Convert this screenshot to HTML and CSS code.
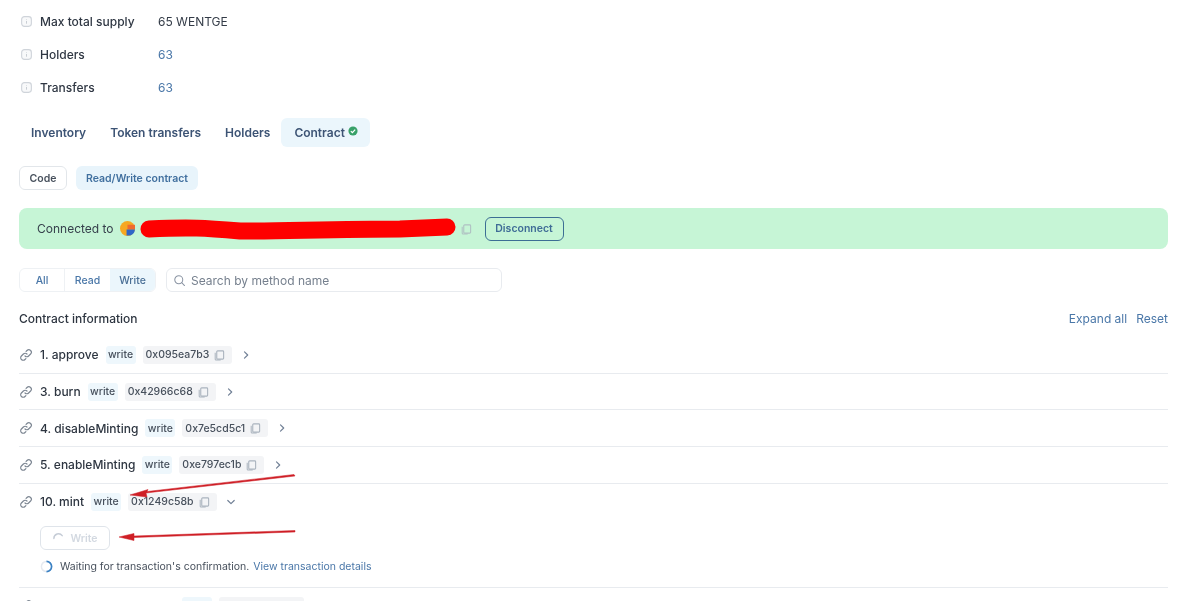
FILE: index.html
```html
<!DOCTYPE html>
<html lang="en">
<head>
<meta charset="utf-8">
<title>Contract</title>
<link rel="stylesheet" href="styles.css">
</head>
<body>
<svg width="0" height="0" class="defs">
  <symbol id="info" viewBox="0 0 12 12"><rect x=".7" y=".7" width="10.6" height="10.6" rx="3" fill="#f8f9fa" stroke="#cfd4da" stroke-width="1.2"/><path d="M6 5.400v3M6 3.400v.6" stroke="#c4c9d0" stroke-width="1"/></symbol>
  <symbol id="copy" viewBox="0 0 12 12"><path d="M4 1.500h5.500a1 1 0 0 1 1 1V9.500a1 1 0 0 1-1 1H4a1 1 0 0 1-1-1v-7a1 1 0 0 1 1-1z" fill="none" stroke="#aab3be" stroke-width="1.200"/><path d="M1.300 3.500v7a1 1 0 0 0 1 1h5" fill="none" stroke="#aab3be" stroke-width="1.100"/></symbol>
  <symbol id="link" viewBox="0 0 14 14"><path d="M6 8a2.500 2.500 0 0 0 3.600 0l2-2A2.500 2.500 0 0 0 8 2.500l-.9.900M8 6a2.500 2.500 0 0 0-3.600 0l-2 2A2.500 2.500 0 0 0 6 11.500l.9-.9" fill="none" stroke="#7d8793" stroke-width="1.200" stroke-linecap="round"/></symbol>
  <symbol id="chev" viewBox="0 0 10 10"><path d="M3.500 1.800 6.700 5 3.500 8.200" fill="none" stroke="#718096" stroke-width="1.200" stroke-linecap="round" stroke-linejoin="round"/></symbol>
</svg>

<main class="page">
  <section class="stats">
    <div class="stat"><svg class="i-info"><use href="#info"/></svg><span class="stat-label">Max total supply</span><span class="stat-value">65 WENTGE</span></div>
    <div class="stat"><svg class="i-info"><use href="#info"/></svg><span class="stat-label">Holders</span><span class="stat-link">63</span></div>
    <div class="stat"><svg class="i-info"><use href="#info"/></svg><span class="stat-label">Transfers</span><span class="stat-link">63</span></div>
  </section>

  <nav class="tabs">
    <span class="tab">Inventory</span>
    <span class="tab">Token transfers</span>
    <span class="tab">Holders</span>
    <span class="tab tab-active">Contract<svg class="i-check" viewBox="0 0 12 12"><circle cx="6" cy="6" r="5.500" fill="#38a169"/><path d="M3.400 6.100 5.300 8l3.300-3.600" fill="none" stroke="#fff" stroke-width="1.500"/></svg></span>
  </nav>

  <div class="subtabs">
    <span class="subtab-code">Code</span>
    <span class="subtab-rw">Read/Write contract</span>
  </div>

  <div class="banner">
    <span>Connected to</span>
    <svg class="avatar" viewBox="0 0 16 16"><circle cx="8" cy="8" r="8" fill="#f6a821"/><path d="M8 4h8v5H8z" fill="#ef6b2e"/><path d="M7 9h9a8 8 0 0 1-5 6.500H7z" fill="#2f66c8"/></svg>
    <span class="address"></span>
    <svg class="i-copy-banner"><use href="#copy"/></svg>
    <span class="disconnect">Disconnect</span>
  </div>

  <div class="filters">
    <div class="segment">
      <span class="seg">All</span>
      <span class="seg seg-mid">Read</span>
      <span class="seg seg-active">Write</span>
    </div>
    <div class="search">
      <svg class="i-search" viewBox="0 0 14 14"><circle cx="6.200" cy="6.200" r="4.300" fill="none" stroke="#8a94a3" stroke-width="1.100"/><path d="m9.400 9.400 3 3" stroke="#8a94a3" stroke-width="1.100" stroke-linecap="round"/></svg>
      <span>Search by method name</span>
    </div>
  </div>

  <div class="info-head">
    <span class="info-title">Contract information</span>
    <span class="info-actions"><span>Expand all</span><span>Reset</span></span>
  </div>

  <div class="method">
    <div class="method-row"><svg class="i-link"><use href="#link"/></svg><span class="method-name">1. approve</span><span class="tag-write">write</span><span class="tag-hash">0x095ea7b3<svg class="i-copy"><use href="#copy"/></svg></span><svg class="i-chev"><use href="#chev"/></svg></div>
  </div>
  <div class="method">
    <div class="method-row"><svg class="i-link"><use href="#link"/></svg><span class="method-name">3. burn</span><span class="tag-write">write</span><span class="tag-hash">0x42966c68<svg class="i-copy"><use href="#copy"/></svg></span><svg class="i-chev"><use href="#chev"/></svg></div>
  </div>
  <div class="method">
    <div class="method-row"><svg class="i-link"><use href="#link"/></svg><span class="method-name">4. disableMinting</span><span class="tag-write">write</span><span class="tag-hash">0x7e5cd5c1<svg class="i-copy"><use href="#copy"/></svg></span><svg class="i-chev"><use href="#chev"/></svg></div>
  </div>
  <div class="method">
    <div class="method-row"><svg class="i-link"><use href="#link"/></svg><span class="method-name">5. enableMinting</span><span class="tag-write">write</span><span class="tag-hash">0xe797ec1b<svg class="i-copy"><use href="#copy"/></svg></span><svg class="i-chev"><use href="#chev"/></svg></div>
  </div>
  <div class="method">
    <div class="method-row"><svg class="i-link"><use href="#link"/></svg><span class="method-name">10. mint</span><span class="tag-write">write</span><span class="tag-hash">0x1249c58b<svg class="i-copy"><use href="#copy"/></svg></span><svg class="i-chev i-chev-down"><use href="#chev"/></svg></div>
    <div class="method-body">
      <span class="write-btn"><svg class="i-spin-btn" viewBox="0 0 14 14"><path d="M2 8a5 5 0 0 1 9-3" fill="none" stroke="#c5ccd6" stroke-width="1.500" stroke-linecap="round"/></svg>Write</span>
      <div class="waiting">
        <svg class="i-spin" viewBox="0 0 14 14"><circle cx="7" cy="7" r="5.500" fill="none" stroke="#e6eaf0" stroke-width="1.600"/><path d="M7 1.500A5.500 5.500 0 0 1 7 12.500" fill="none" stroke="#3b82c4" stroke-width="1.800"/></svg>
        <span>Waiting for transaction's confirmation.</span>
        <span class="link">View transaction details</span>
      </div>
    </div>
  </div>
  <div class="method">
    <div class="method-row"><svg class="i-link"><use href="#link"/></svg><span class="name-blank"></span><span class="tag-write"></span><span class="tag-hash tag-hash-blank"></span></div>
  </div>
</main>

<svg class="overlay" viewBox="0 0 1200 601" aria-hidden="true">
  <path class="scribble" d="M149 229C190 227 205 228 240 231 280 231 340 229 400 229L447 227"/>
  <path class="arrow-head" d="M294 474.500 295 476 146 493 147 497 130 495 148 489.500 147 491.500z"/>
  <path class="arrow-head" d="M295 530.500 295 532 134 537.500 134 540.500 119 537 134 533.500 134 536z"/>
</svg>
</body>
</html>
```

FILE: styles.css
```css
* { box-sizing: border-box; }
html, body { margin: 0; height: 601px; overflow: hidden; background: #fff; }
body { font-family: Inter, "Liberation Sans", sans-serif; font-size: 12px; color: #2d3748; position: relative; }
.defs { position: absolute; }
.page { padding: 5px 32px 0 19px; filter: blur(.3px); }

.stats { display: flex; flex-direction: column; }
.stat { display: flex; align-items: center; height: 33px; padding-left: 2px; font-weight: 500; }
.i-info { width: 11px; height: 11px; margin-right: 8px; }
.stat-label { width: 118px; color: #2f3743; }
.stat-value { font-weight: 400; color: #333b47; }
.stat-link { font-weight: 400; color: #4a77a8; }

.tabs { display: flex; margin-top: 14px; height: 30px; align-items: flex-start; }
.tab { padding: 0 12px; height: 29px; display: flex; align-items: center; font-weight: 600; color: #3d5475; }
.tab-active { background: #ebf6fc; border-radius: 6px; margin-left: -1px; padding: 0 12px 0 13px; }
.i-check { width: 10px; height: 10px; margin: 0 0 3px 3px; }

.subtabs { display: flex; gap: 9px; margin-top: 18px; font-size: 10.500px; font-weight: 600; }
.subtab-code { height: 24px; width: 48px; display: flex; align-items: center; justify-content: center; border: 1.500px solid #e2e6ea; border-radius: 6px; color: #47505c; }
.subtab-rw { height: 24px; padding: 0 10px; display: flex; align-items: center; background: #e8f4fb; border-radius: 6px; color: #41709f; }

.banner { display: flex; align-items: center; height: 41px; margin-top: 18px; padding-left: 18px; background: #c6f5d6; border-radius: 8px; color: #36404c; }
.avatar { width: 15px; height: 15px; margin-left: 6px; }
.address { width: 315px; margin-left: 7px; }
.i-copy-banner { width: 11px; height: 12px; margin-left: 4px; opacity: .8; }
.disconnect { margin-left: 13px; height: 24px; width: 79px; display: flex; align-items: center; justify-content: center; border: 1.500px solid #3c6e94; border-radius: 6px; font-size: 10.500px; font-weight: 600; color: #3f6c96; }

.filters { display: flex; margin-top: 19px; gap: 10px; font-size: 10.500px; }
.segment { display: flex; height: 24px; width: 137px; border: 1px solid #eef1f4; border-radius: 6px; font-weight: 500; color: #4a77a8; overflow: hidden; }
.seg { display: flex; align-items: center; justify-content: center; width: 44px; }
.seg-mid { width: 46px; border-left: 1px solid #eef1f4; }
.seg-active { flex: 1; background: #ebf6fc; color: #4a6f96; }
.search { display: flex; align-items: center; width: 336px; height: 24px; border: 1px solid #e8ebef; border-radius: 6px; padding-left: 6px; font-size: 12px; color: #76808e; }
.i-search { width: 13px; height: 13px; margin-right: 5px; }

.info-head { display: flex; justify-content: space-between; align-items: center; margin-top: 18px; height: 16px; }
.info-title { font-weight: 500; color: #2d3540; }
.info-actions { display: flex; gap: 9px; color: #4a77a8; }

.method { border-bottom: 1px solid #e8ebef; }
.info-head + .method { margin-top: 11px; }
.method-row { display: flex; align-items: center; height: 35.700px; }
.i-link { width: 14px; height: 14px; margin-right: 7px; }
.method-name { font-weight: 500; color: #2d3540; white-space: nowrap; }
.name-blank { width: 135px; }
.tag-write { margin-left: 7px; height: 18px; width: 30px; display: flex; align-items: center; justify-content: center; background: #eef7fc; border-radius: 3px; font-size: 10.500px; font-weight: 500; color: #47505c; }
.tag-hash { margin-left: 7px; height: 18px; padding: 0 7px 0 3px; display: flex; align-items: center; gap: 5px; background: #f3f4f6; border-radius: 3px; font-size: 10.500px; font-weight: 500; color: #47505c; }
.tag-hash-blank { width: 85px; }
.i-copy { width: 11px; height: 12px; }
.i-chev { width: 10px; height: 10px; margin-left: 9px; }
.i-chev-down { transform: rotate(90deg); }

.method-body { padding: 7px 0 0 21px; height: 67.300px; }
.write-btn { display: inline-flex; align-items: center; justify-content: center; gap: 5px; width: 70px; height: 24px; border: 1.500px solid #dfe4ea; border-radius: 6px; font-size: 10.500px; font-weight: 600; color: #d3d9e1; }
.i-spin-btn { width: 13px; height: 13px; margin-bottom: 2px; }
.waiting { display: flex; align-items: center; margin-top: 8px; font-size: 10.500px; color: #47505c; height: 16px; }
.i-spin { width: 13px; height: 13px; margin-right: 7px; }
.link { margin-left: 4px; color: #4a77a8; }

.overlay { position: absolute; inset: 0; width: 1200px; height: 601px; pointer-events: none; }
.scribble { fill: none; stroke: #fe0000; stroke-width: 17px; stroke-linecap: round; stroke-linejoin: round; }
.arrow-head { fill: #cf1f26; stroke: #cf1f26; stroke-width: .5px; }
```
